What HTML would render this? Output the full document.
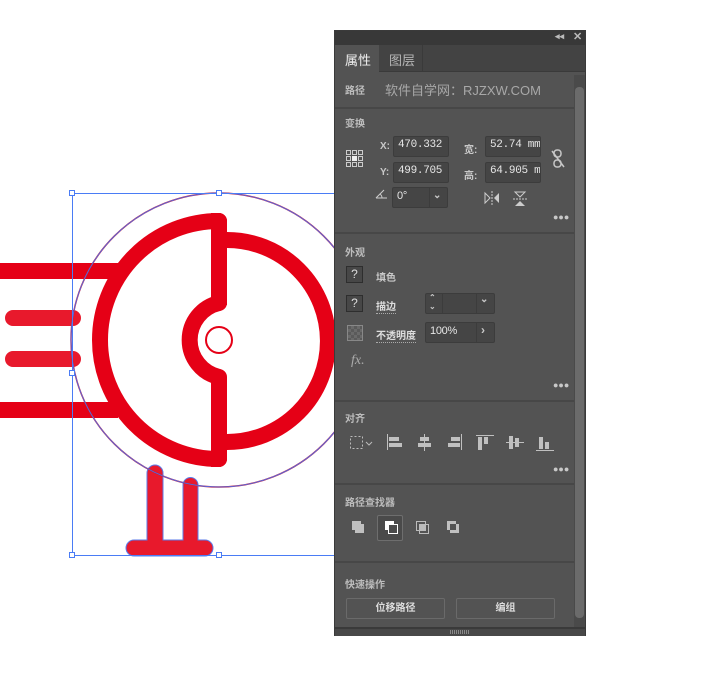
<!DOCTYPE html>
<html><head><meta charset="utf-8"><style>
*{margin:0;padding:0;box-sizing:border-box}
body{width:711px;height:684px;background:#fff;position:relative;overflow:hidden;font-family:"Liberation Sans","Noto Sans CJK SC",sans-serif}
.a{position:absolute}
#p{left:334px;top:30px;width:252px;height:606px;background:#535353;border:1px solid #3a3a3a}
.t{color:#c8c8c8;font-size:10px;font-weight:bold}
.lbl{color:#bdbdbd;font-size:10px;font-weight:bold}
.inp{background:#454545;border:1px solid #3c3c3c;border-radius:2px;color:#e6e6e6;font-family:"Liberation Mono",monospace;font-size:11px;padding:2px 0 0 4px;height:21px;white-space:nowrap;overflow:hidden;letter-spacing:-0.3px}
.sep{height:2px;background:#474747;left:0;width:239px}
.dots{color:#c8c8c8;font-size:9px;letter-spacing:0px}
.btn{border:1px solid #6a6a6a;border-radius:2px;color:#ddd;font-size:10px;text-align:center;line-height:20px;height:21px;font-weight:bold}
</style></head><body>
<svg class="a" style="left:0;top:0" width="334" height="684">
<g fill="none" stroke="#e50016" stroke-width="16">
<path d="M0 271H118M0 410H118"/>
<path d="M219 305V221A119 119 0 0 0 219 459V377" stroke-linejoin="round"/>
<path d="M227 240A101 101 0 0 1 227 442"/>
<path d="M219 303A38 38 0 0 0 219 377" />
</g>
<path d="M211 213h8a8 8 0 0 1 8 8v82a8 8 0 0 1 -8 8h-8z M211 369h8a8 8 0 0 1 8 8v82a8 8 0 0 1 -8 8h-8z" fill="#e50016"/>
<g stroke="#e8192c" stroke-width="16" stroke-linecap="round"><path d="M13 318H73M13 359H73"/></g>
<circle cx="219" cy="340" r="13" fill="none" stroke="#e50016" stroke-width="2"/>
<path d="M147 473a8 8 0 0 1 16 0v67h20v-55a7.5 7.5 0 0 1 15 0v55h7a8 8 0 0 1 0 16h-71a8 8 0 0 1 0 -16h13z" fill="#e8192c" stroke="#5b7be8" stroke-width="1"/>
<ellipse cx="219" cy="340" rx="148" ry="147" fill="none" stroke="#c02040" stroke-width="1.5"/>
<ellipse cx="219" cy="340" rx="148" ry="147" fill="none" stroke="#4a70f0" stroke-width="0.8"/>
<path d="M72.5 193.5H334M72.5 193.5V555.5H334" fill="none" stroke="#4a7cf5" stroke-width="1"/>
<g fill="#fff" stroke="#4a7cf5"><rect x="69.5" y="190.5" width="5" height="5"/><rect x="216.5" y="190.5" width="5" height="5"/><rect x="69.5" y="370.5" width="5" height="5"/><rect x="69.5" y="552.5" width="5" height="5"/><rect x="216.5" y="552.5" width="5" height="5"/></g>
</svg>
<div id="p" class="a">
<div class="a" style="left:0;top:0;width:250px;height:14px;background:#383838"></div>
<div class="a t" style="left:220px;top:0;font-size:9px;color:#bbb">◂◂</div>
<div class="a t" style="left:238px;top:-1px;font-size:11px;color:#bbb;font-weight:bold">✕</div>
<div class="a" style="left:0;top:14px;width:250px;height:27px;background:#434343;border-bottom:1px solid #3a3a3a"></div>
<div class="a" style="left:0;top:14px;width:44px;height:28px;background:#535353"></div>
<div class="a" style="left:44px;top:14px;width:44px;height:27px;border-right:1px solid #3a3a3a"></div>
<div class="a" style="left:10px;top:19px;color:#eee;font-size:13px">属性</div>
<div class="a" style="left:54px;top:19px;color:#b5b5b5;font-size:13px">图层</div>
<div class="a" style="left:239px;top:44px;width:11px;height:560px;background:#4a4a4a"></div>
<div class="a" style="left:240px;top:56px;width:9px;height:531px;background:#6b6b6b;border-radius:4px"></div>
<div class="a lbl" style="left:10px;top:51px">路径</div>
<div class="a" style="left:50px;top:49px;color:#a8a8a8;font-size:13px">软件自学网：RJZXW.COM</div>
<div class="a sep" style="top:76px"></div>
<div class="a lbl" style="left:10px;top:84px">变换</div>
<svg class="a" style="left:10px;top:118px" width="20" height="20"><g fill="none" stroke="#ccc"><rect x="1.5" y="1.5" width="4" height="4"/><rect x="7.5" y="1.5" width="4" height="4"/><rect x="13.5" y="1.5" width="4" height="4"/><rect x="1.5" y="7.5" width="4" height="4"/><rect x="13.5" y="7.5" width="4" height="4"/><rect x="1.5" y="13.5" width="4" height="4"/><rect x="7.5" y="13.5" width="4" height="4"/><rect x="13.5" y="13.5" width="4" height="4"/></g><rect x="7" y="7" width="5" height="5" fill="#eee"/></svg>
<div class="a t" style="left:45px;top:110px">X:</div>
<div class="a t" style="left:45px;top:136px">Y:</div>
<div class="a inp" style="left:58px;top:105px;width:56px">470.332</div>
<div class="a inp" style="left:58px;top:131px;width:56px">499.705</div>
<div class="a t" style="left:129px;top:110px">宽:</div>
<div class="a t" style="left:129px;top:136px">高:</div>
<div class="a inp" style="left:150px;top:105px;width:56px">52.74 mm</div>
<div class="a inp" style="left:150px;top:131px;width:56px">64.905 m</div>
<svg class="a" style="left:215px;top:118px" width="16" height="20"><g fill="none" stroke="#c8c8c8" stroke-width="1.5"><rect x="4" y="1" width="7" height="7" rx="3"/><rect x="4" y="11" width="7" height="7" rx="3"/><path d="M2 2L14 18"/></g></svg>
<svg class="a" style="left:40px;top:157px" width="14" height="12"><path d="M1 10H12M1 10L9 2M5 6a5 5 0 0 1 2 4" fill="none" stroke="#ccc"/></svg>
<div class="a inp" style="left:57px;top:156px;width:56px;font-family:'Liberation Sans';font-size:11px">0°</div>
<div class="a" style="left:94px;top:157px;width:1px;height:19px;background:#3c3c3c"></div>
<div class="a t" style="left:98px;top:159px">⌄</div>
<svg class="a" style="left:149px;top:160px" width="16" height="14"><path d="M1 2L6 7L1 12Z" fill="none" stroke="#ccc"/><path d="M15 2L10 7L15 12Z" fill="#ccc"/><path d="M8 0V14" stroke="#ccc" stroke-dasharray="2 1"/></svg>
<svg class="a" style="left:178px;top:160px" width="14" height="16"><path d="M2 1L7 6L12 1Z" fill="none" stroke="#ccc"/><path d="M2 15L7 10L12 15Z" fill="#ccc"/><path d="M0 8H14" stroke="#ccc" stroke-dasharray="2 1"/></svg>
<div class="a dots" style="left:218px;top:181px">●●●</div>
<div class="a sep" style="top:201px"></div>
<div class="a lbl" style="left:10px;top:213px">外观</div>
<div class="a" style="left:11px;top:235px;width:17px;height:17px;border:1px solid #2e2e2e;background:#474747;color:#ddd;font-size:12px;text-align:center;line-height:15px">?</div>
<div class="a t" style="left:41px;top:238px">填色</div>
<div class="a" style="left:11px;top:264px;width:17px;height:17px;border:1px solid #2e2e2e;background:#474747;color:#ddd;font-size:12px;text-align:center;line-height:15px">?</div>
<div class="a t" style="left:41px;top:267px;border-bottom:1px dotted #aaa;color:#ddd">描边</div>
<div class="a" style="left:90px;top:262px;width:70px;height:21px;background:#454545;border:1px solid #3c3c3c;border-radius:2px"></div>
<div class="a" style="left:107px;top:263px;width:1px;height:19px;background:#3c3c3c"></div>
<div class="a" style="left:141px;top:263px;width:1px;height:19px;background:#3c3c3c"></div>
<div class="a t" style="left:94px;top:262px;font-size:8px;line-height:9px">⌃<br>⌄</div>
<div class="a t" style="left:145px;top:263px">⌄</div>
<div class="a" style="left:12px;top:294px;width:16px;height:16px;border:1px solid #888;background:repeating-conic-gradient(#6a6a6a 0 25%,#5a5a5a 0 50%) 0 0/6px 6px"></div>
<div class="a t" style="left:41px;top:296px;border-bottom:1px dotted #aaa;color:#ddd">不透明度</div>
<div class="a inp" style="left:90px;top:291px;width:70px;font-family:'Liberation Sans'">100%</div>
<div class="a" style="left:141px;top:292px;width:1px;height:19px;background:#3c3c3c"></div>
<div class="a t" style="left:146px;top:292px;font-size:12px">›</div>
<div class="a" style="left:16px;top:322px;color:#aaa;font-size:14px;font-style:italic;font-family:'Liberation Serif'">fx.</div>
<div class="a dots" style="left:218px;top:349px">●●●</div>
<div class="a sep" style="top:369px"></div>
<div class="a lbl" style="left:10px;top:379px">对齐</div>
<svg class="a" style="left:12px;top:403px" width="230" height="20" fill="#c0c0c0">
<rect x="3.5" y="2.5" width="12" height="12" fill="none" stroke="#bbb" stroke-dasharray="2 2"/><path d="M19 8l3 3 3-3" fill="none" stroke="#bbb"/>
<rect x="40" y="0" width="1" height="16"/><rect x="42" y="3" width="10" height="4"/><rect x="42" y="9" width="13" height="4"/>
<rect x="77" y="0" width="1" height="17"/><rect x="73" y="3" width="9" height="4"/><rect x="71" y="9" width="13" height="4"/>
<rect x="114" y="0" width="1" height="16"/><rect x="104" y="3" width="9" height="4"/><rect x="101" y="9" width="12" height="4"/>
<rect x="129" y="1" width="18" height="1"/><rect x="131" y="3" width="4" height="13"/><rect x="137" y="3" width="4" height="7"/>
<rect x="159" y="8" width="18" height="1"/><rect x="162" y="2" width="4" height="13"/><rect x="168" y="4" width="4" height="9"/>
<rect x="189" y="16" width="18" height="1"/><rect x="192" y="3" width="4" height="12"/><rect x="198" y="8" width="4" height="7"/>
</svg>
<div class="a dots" style="left:218px;top:433px">●●●</div>
<div class="a sep" style="top:452px"></div>
<div class="a lbl" style="left:10px;top:463px">路径查找器</div>
<div class="a" style="left:42px;top:484px;width:26px;height:26px;border:1px solid #6e6e6e;border-radius:2px;background:#4a4a4a"></div>
<svg class="a" style="left:15px;top:489px" width="130" height="16">
<rect x="2" y="1" width="9" height="9" fill="#c0c0c0"/><rect x="5" y="4" width="9" height="9" fill="#c0c0c0"/>
<rect x="35" y="1" width="9" height="9" fill="#fff"/><rect x="38.5" y="4.5" width="9" height="9" fill="#4a4a4a" stroke="#fff"/>
<rect x="66.5" y="1.5" width="9" height="9" fill="none" stroke="#bbb"/><rect x="69.5" y="4.5" width="9" height="9" fill="none" stroke="#bbb"/><rect x="69" y="4" width="7" height="7" fill="#bbb"/>
<rect x="97" y="1" width="9" height="9" fill="#c0c0c0"/><rect x="100" y="4" width="9" height="9" fill="#c0c0c0"/><rect x="100" y="4" width="6" height="6" fill="#535353"/>
</svg>
<div class="a sep" style="top:530px"></div>
<div class="a lbl" style="left:10px;top:545px">快速操作</div>
<div class="a btn" style="left:11px;top:567px;width:99px">位移路径</div>
<div class="a btn" style="left:121px;top:567px;width:99px">编组</div>
<div class="a" style="left:0;top:596px;width:250px;height:2px;background:#3a3a3a"></div>
<div class="a" style="left:0;top:598px;width:250px;height:7px;background:#484848"></div>
<div class="a" style="left:115px;top:599px;width:20px;height:4px;background:repeating-linear-gradient(90deg,#888 0 1px,transparent 1px 2px)"></div>
</div>
</body></html>
